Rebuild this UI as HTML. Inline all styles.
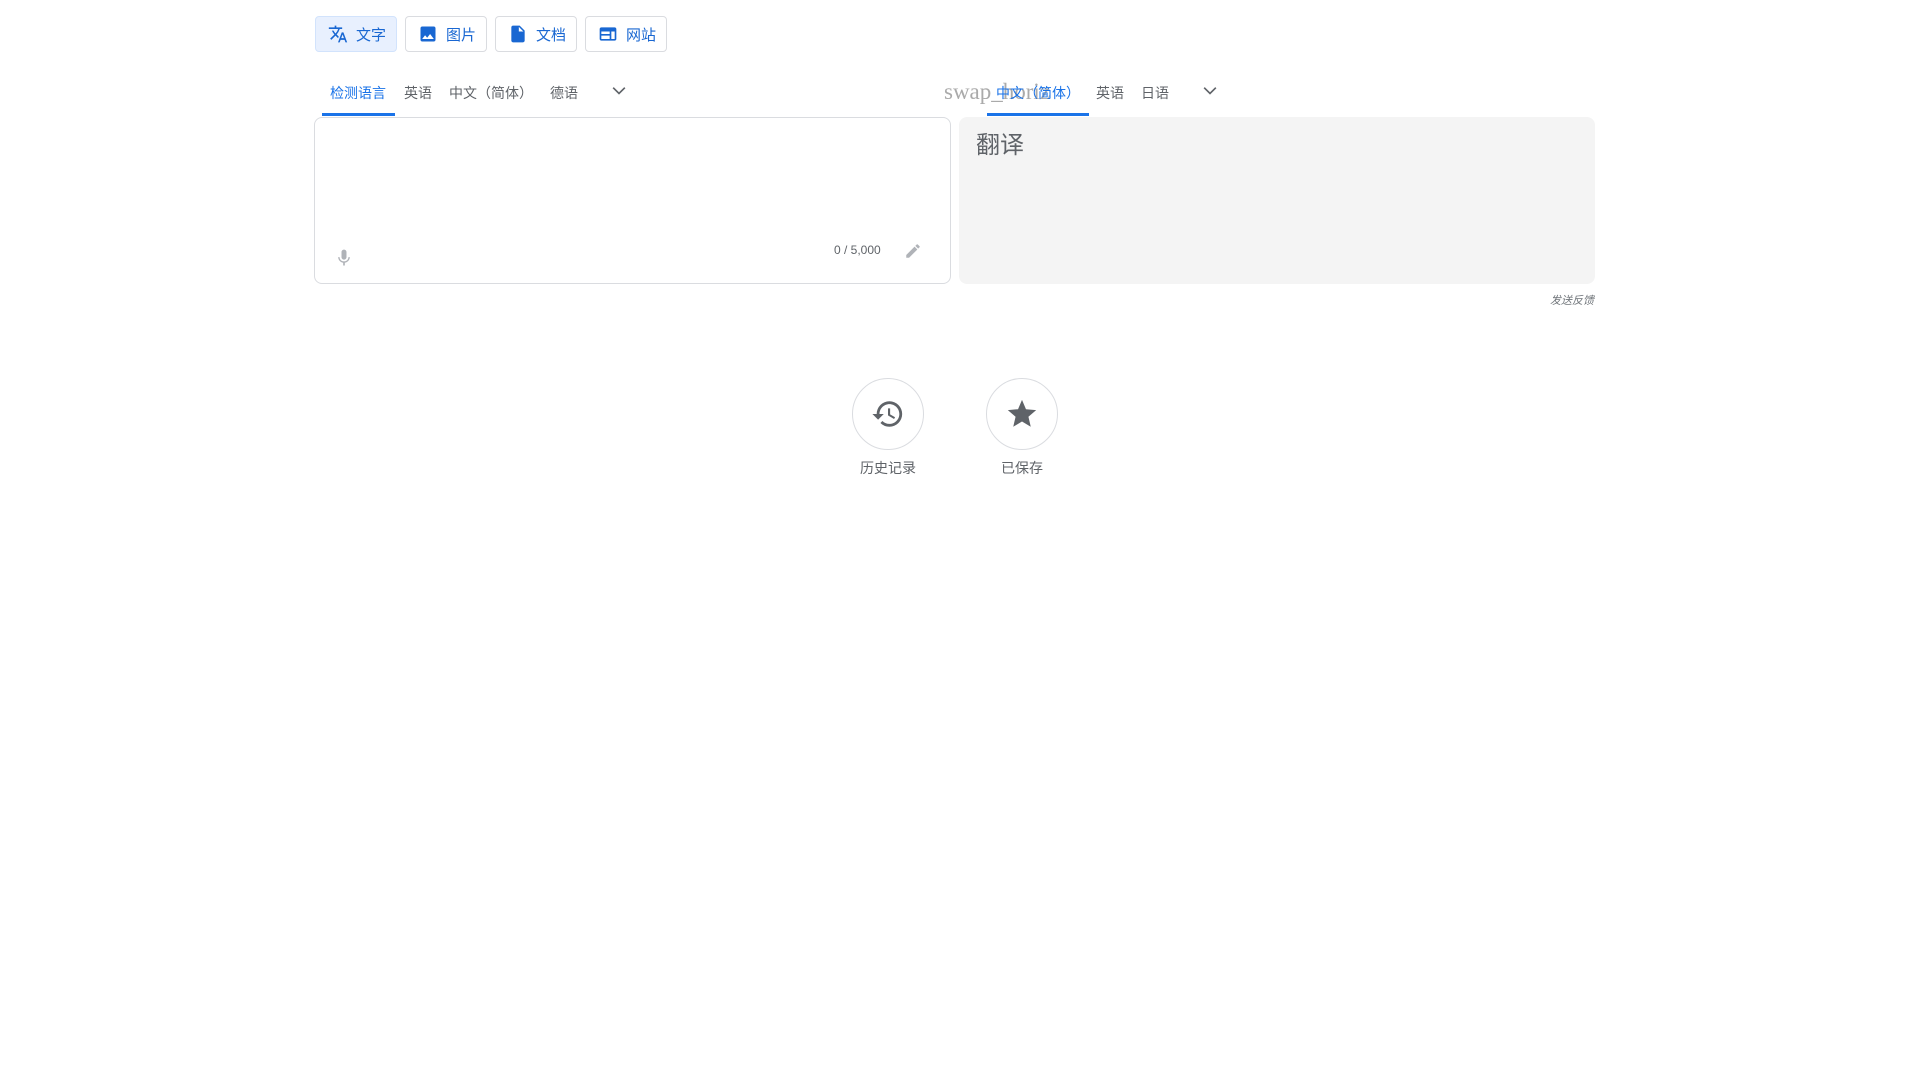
<!DOCTYPE html>
<html><head><meta charset="utf-8"><style>
*{box-sizing:border-box;margin:0;padding:0}
body{width:1920px;height:1080px;background:#fff;font-family:"Liberation Sans","Noto Sans CJK SC",sans-serif;position:relative;overflow:hidden;color:#5f6368}
.a{position:absolute;white-space:nowrap}
.btn{position:absolute;top:16px;height:36px;border:1px solid #dadce0;border-radius:4px;background:#fff;color:#1967d2;font-size:15px;display:flex;align-items:center;padding-left:12px;gap:8px}
.btn svg{width:20px;height:20px;fill:#1967d2}
.tab{position:absolute;top:83px;font-size:14px;color:#5f6368}
.ul{position:absolute;top:113px;height:3px;background:#1a73e8}
.box{position:absolute;top:117px;height:167px;border-radius:8px}
.circ{position:absolute;top:378px;width:72px;height:72px;border:1px solid #dadce0;border-radius:50%;display:flex;align-items:center;justify-content:center}
.lbl{position:absolute;top:458px;font-size:14px;color:#5f6368;width:120px;text-align:center}
</style></head><body>
<div class="btn" style="left:315px;width:82px;background:#e8f0fe;border-color:#d2e3fc"><svg viewBox="0 0 24 24"><path d="M12.87 15.07l-2.54-2.51.03-.03A17.5 17.5 0 0014.07 6H17V4h-7V2H8v2H1v2h11.17C11.5 7.92 10.44 9.75 9 11.35 8.07 10.32 7.3 9.19 6.69 8h-2c.73 1.63 1.73 3.17 2.98 4.56l-5.09 5.02L4 19l5-5 3.11 3.11.76-2.04zM18.5 10h-2L12 22h2l1.12-3h4.75L21 22h2l-4.5-12zm-2.62 7l1.62-4.33L19.12 17h-3.24z"/></svg>文字</div>
<div class="btn" style="left:405px;width:82px"><svg viewBox="0 0 24 24"><path d="M21 19V5c0-1.1-.9-2-2-2H5c-1.1 0-2 .9-2 2v14c0 1.1.9 2 2 2h14c1.1 0 2-.9 2-2zM8.5 13.5l2.5 3 3.5-4.5 4.5 6H5l3.5-4.5z"/></svg>图片</div>
<div class="btn" style="left:495px;width:82px"><svg viewBox="0 0 24 24"><path d="M14 2H6c-1.1 0-2 .9-2 2v16c0 1.1.9 2 2 2h12c1.1 0 2-.9 2-2V8l-6-6zm-1 7V3.5L18.5 9H13z"/></svg>文档</div>
<div class="btn" style="left:585px;width:82px"><svg viewBox="0 0 24 24"><path d="M20 4H4c-1.1 0-2 .9-2 2v12c0 1.1.9 2 2 2h16c1.1 0 2-.9 2-2V6c0-1.1-.9-2-2-2zM4 9h10v3H4V9zm0 5h10v4H4v-4zm16 4h-4V9h4v9z"/></svg>网站</div>

<div class="tab" style="left:330px;color:#1a73e8">检测语言</div>
<div class="ul" style="left:322px;width:73px"></div>
<div class="tab" style="left:404px">英语</div>
<div class="tab" style="left:449px">中文（简体）</div>
<div class="tab" style="left:550px">德语</div>
<svg class="a" style="left:609px;top:81px" width="20" height="20" viewBox="0 0 24 24"><path d="M5 8l7 7 7-7" fill="none" stroke="#5f6368" stroke-width="2"/></svg>

<div class="a" style="left:944px;top:79px;font-family:'Liberation Serif',serif;font-size:23px;color:#aaa">swap_horiz</div>
<div class="tab" style="left:996px;color:#1a73e8">中文（简体）</div>
<div class="ul" style="left:987px;width:102px"></div>
<div class="tab" style="left:1096px">英语</div>
<div class="tab" style="left:1141px">日语</div>
<svg class="a" style="left:1200px;top:81px" width="20" height="20" viewBox="0 0 24 24"><path d="M5 8l7 7 7-7" fill="none" stroke="#5f6368" stroke-width="2"/></svg>

<div class="box" style="left:314px;width:637px;border:1px solid #dadce0"></div>
<svg class="a" style="left:334px;top:247px" width="20" height="22" viewBox="0 0 24 24"><path d="M12 14c1.66 0 3-1.34 3-3V5c0-1.66-1.34-3-3-3S9 3.34 9 5v6c0 1.66 1.34 3 3 3zm5.3-3c0 3-2.54 5.1-5.3 5.1S6.7 14 6.7 11H5c0 3.41 2.72 6.23 6 6.72V21h2v-3.28c3.28-.48 6-3.3 6-6.72h-1.7z" fill="#b0b3b8"/></svg>
<div class="a" style="left:834px;top:243px;font-size:12px;color:#5f6368">0 / 5,000</div>
<svg class="a" style="left:904px;top:242px" width="18" height="18" viewBox="0 0 24 24"><path d="M3 17.25V21h3.75L17.81 9.94l-3.75-3.75L3 17.25zM20.71 7.04a1 1 0 000-1.41l-2.34-2.34a1 1 0 00-1.41 0l-1.83 1.83 3.75 3.75 1.83-1.83z" fill="#b0b3b8"/></svg>

<div class="box" style="left:959px;width:636px;background:#f4f4f4"></div>
<div class="a" style="left:976px;top:125px;font-size:24px;color:#5f6368">翻译</div>
<div class="a" style="left:1550px;top:292px;font-size:11px;font-style:italic;color:#70757a">发送反馈</div>

<div class="circ" style="left:852px"><svg width="34" height="34" viewBox="0 0 24 24"><path d="M13 3a9 9 0 00-9 9H1l3.89 3.89.07.14L9 12H6c0-3.87 3.13-7 7-7s7 3.13 7 7-3.13 7-7 7c-1.93 0-3.68-.79-4.94-2.06l-1.42 1.42A8.954 8.954 0 0013 21a9 9 0 000-18zm-1 5v5l4.28 2.54.72-1.21-3.5-2.08V8H12z" fill="#5f6368"/></svg></div>
<div class="circ" style="left:986px"><svg width="34" height="34" viewBox="0 0 24 24"><path d="M12 17.27L18.18 21l-1.64-7.03L22 9.24l-7.19-.61L12 2 9.19 8.63 2 9.24l5.46 4.73L5.82 21z" fill="#5f6368"/></svg></div>
<div class="lbl" style="left:828px">历史记录</div>
<div class="lbl" style="left:962px">已保存</div>
</body></html>
